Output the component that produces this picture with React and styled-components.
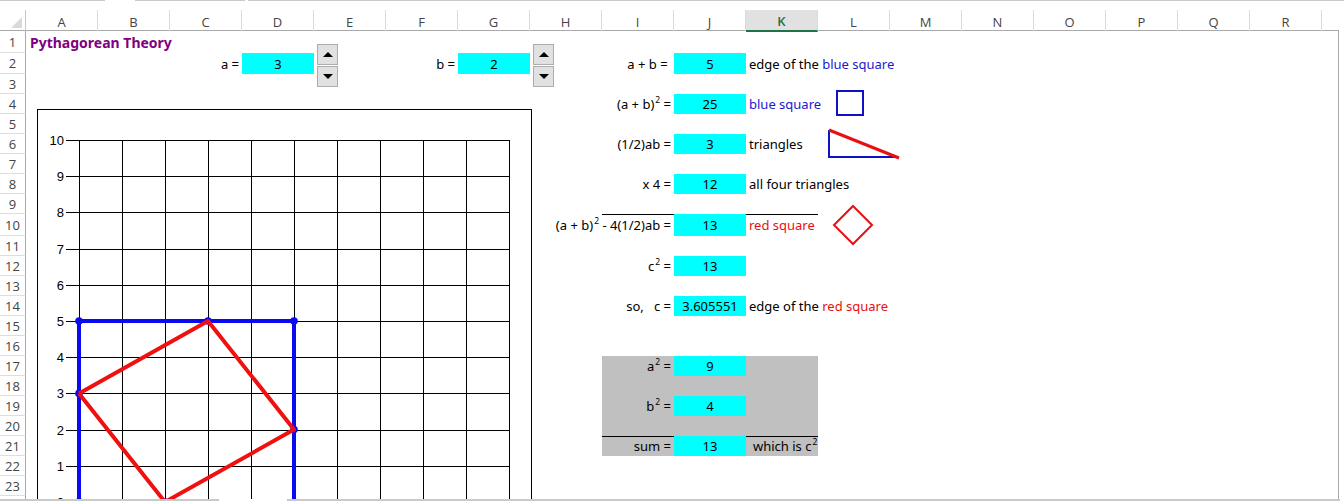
import React from 'react'
import styled, { createGlobalStyle, css } from 'styled-components'

const COLS = ['A', 'B', 'C', 'D', 'E', 'F', 'G', 'H', 'I', 'J', 'K', 'L', 'M', 'N', 'O', 'P', 'Q', 'R']
const ROW_H = [22, 21, 20, 20, 20, 20, 20, 20, 20, 22, 20, 20, 20, 20, 20, 20, 20, 20, 20, 20, 20, 20, 20, 20]
const TRACKS = `26px repeat(${COLS.length}, 72px) 16px`

// column letter -> grid column line (row header is column 1)
const col = (letter) => COLS.indexOf(letter) + 2

const GlobalStyle = createGlobalStyle`
  * { box-sizing: border-box; }
  html, body { margin: 0; padding: 0; background: #fff; overflow: hidden; }
  body { font-family: "Noto Sans", "DejaVu Sans", sans-serif; }
`

const Window = styled.div`
  width: 1344px;
  height: 501px;
  display: flex;
  flex-direction: column;
  overflow: hidden;
  background: #fff;
`

const TopRule = styled.div`
  display: flex;
  height: 10px;
  align-items: flex-start;
`

const RuleBit = styled.div`
  height: ${p => p.$h || 1}px;
  width: ${p => (p.$w ? `${p.$w}px` : 'auto')};
  flex: ${p => (p.$w ? 'none' : 1)};
  background: ${p => (p.$gap ? 'transparent' : '#c9c9c9')};
`

const HeaderRow = styled.div`
  display: grid;
  grid-template-columns: ${TRACKS};
  width: 1339px;
  height: 21px;
  border-bottom: 1px solid #a9a9a9;
`

const Corner = styled.div`
  display: flex;
  justify-content: flex-end;
  align-items: flex-end;
  padding: 0 3px 3px 0;
  border-right: 1px solid #c6c6c6;
`

const CornerMark = styled.div`
  width: 0;
  height: 0;
  border-left: 11px solid transparent;
  border-bottom: 11px solid #dadada;
`

const ColHead = styled.div`
  display: flex;
  align-items: center;
  justify-content: center;
  font-family: "Open Sans", "Noto Sans", sans-serif;
  font-size: 13px;
  color: ${p => (p.$active ? '#217346' : '#444')};
  font-weight: ${p => (p.$active ? 600 : 400)};
  background: ${p => (p.$active ? '#e1e1e1' : 'transparent')};
  border-right: 1px solid #dadada;
  border-bottom: ${p => (p.$active ? '2px solid #217346' : 'none')};
  margin-bottom: ${p => (p.$active ? '-1px' : 0)};
  padding-top: 2px;
`

const Body = styled.div`
  display: grid;
  grid-template-columns: ${TRACKS};
  grid-template-rows: ${ROW_H.map(h => `${h}px`).join(' ')};
  width: 1339px;
  height: 468px;
  overflow: hidden;
  border-right: 1px solid #a9a9a9;
  font-size: 13px;
  color: #000;
`

const RowNum = styled.div`
  grid-column: 1;
  grid-row: ${p => p.$row};
  display: flex;
  align-items: center;
  justify-content: center;
  font-family: "Open Sans", "Noto Sans", sans-serif;
  font-size: 13px;
  color: #444;
  border-right: 1px solid #a9a9a9;
  border-bottom: 1px solid #dedede;
`

const place = css`
  grid-column: ${p => p.$col} / span ${p => p.$span || 1};
  grid-row: ${p => p.$row} / span ${p => p.$rspan || 1};
`

const Title = styled.div`
  ${place};
  display: flex;
  align-items: center;
  padding-left: 4px;
  white-space: nowrap;
  font-weight: 700;
  font-size: 14px;
  color: #800080;
`

const LabelCell = styled.div`
  ${place};
  display: flex;
  align-items: center;
  justify-content: flex-end;
  padding-right: 3px;
  white-space: pre;
  min-width: 0;
`

const Value = styled.div`
  ${place};
  display: flex;
  align-items: center;
  justify-content: center;
  background: #00ffff;
  white-space: nowrap;
`

const NoteCell = styled.div`
  ${place};
  display: flex;
  align-items: center;
  padding-left: ${p => p.$indent || 3}px;
  white-space: pre;
  color: ${p => p.$color || '#000'};
`

const Tint = styled.span`
  color: ${p => p.$color};
`

const Sup = styled.sup`
  font-size: 8.5px;
  line-height: 0;
  vertical-align: 6px;
  margin-left: 1px;
`

const Label = ({ children, ...rest }) => (
  <LabelCell {...rest}><span>{children}</span></LabelCell>
)

const Note = ({ children, ...rest }) => (
  <NoteCell {...rest}><span>{children}</span></NoteCell>
)

const Panel = styled.div`
  ${place};
  background: #c0c0c0;
`

const TopLine = styled.div`
  ${place};
  border-top: 1px solid #000;
`

const SpinGroup = styled.div`
  ${place};
  align-self: start;
  justify-self: start;
  margin: 13px 0 0 3px;
  display: flex;
  flex-direction: column;
  gap: 1px;
`

const SpinButton = styled.div`
  width: 21px;
  height: 21px;
  border: 1px solid #acacac;
  background: #e1e1e1;
  display: flex;
  align-items: center;
  justify-content: center;
`

const Arrow = styled.div`
  width: 0;
  height: 0;
  border-left: 5px solid transparent;
  border-right: 5px solid transparent;
  ${p => (p.$down ? 'border-top: 5px solid #000;' : 'border-bottom: 5px solid #000;')}
`

const Figure = styled.svg`
  ${place};
  align-self: start;
  justify-self: start;
  overflow: visible;
  margin-left: ${p => p.$dx}px;
  margin-top: ${p => p.$dy}px;
`

const ChartBox = styled.div`
  ${place};
  align-self: start;
  justify-self: start;
  margin: 15px 0 0 11px;
  width: 495px;
  height: 420px;
  border: 1px solid #000;
  background: #fff;
`

const ChartText = styled.text`
  font-family: "Liberation Sans", "Noto Sans", sans-serif;
  font-size: 13px;
  fill: #000;
`

const BottomRule = styled.div`
  display: flex;
  height: 2px;
  width: 1340px;
`

const Spinner = ({ column }) => (
  <SpinGroup $col={column} $row={1} $rspan={3}>
    <SpinButton><Arrow /></SpinButton>
    <SpinButton><Arrow $down /></SpinButton>
  </SpinGroup>
)

const X0 = 41
const UX = 43
const Y0 = 392
const UY = 36.2
const px = x => X0 + x * UX
const py = y => Y0 - y * UY

const BLUE_PTS = [[0, 0], [0, 3], [0, 5], [3, 5], [5, 5], [5, 2], [5, 0], [2, 0], [0, 0]]
const RED_PTS = [[0, 3], [3, 5], [5, 2], [2, 0], [0, 3]]
const ticks = Array.from({ length: 11 }, (_, i) => i)

const Chart = () => (
  <ChartBox $col={col('A')} $row={4} $span={7} $rspan={21}>
    <svg width="493" height="418">
      <g stroke="#000" strokeWidth="1" shapeRendering="crispEdges">
        {ticks.map(i => (
          <line key={`h${i}`} x1={28} x2={px(10)} y1={Math.round(py(i)) + 0.5} y2={Math.round(py(i)) + 0.5} />
        ))}
        {ticks.map(i => (
          <line key={`v${i}`} x1={Math.round(px(i)) + 0.5} x2={Math.round(px(i)) + 0.5} y1={py(10)} y2={418} />
        ))}
      </g>
      {ticks.map(i => (
        <ChartText key={`t${i}`} x={26} y={py(i) + 5} textAnchor="end">{i}</ChartText>
      ))}
      <polyline
        points={BLUE_PTS.map(([x, y]) => `${px(x)},${py(y)}`).join(' ')}
        fill="none" stroke="#0a0af0" strokeWidth="4" strokeLinejoin="round"
      />
      {BLUE_PTS.map(([x, y], i) => (
        <circle key={`m${i}`} cx={px(x)} cy={py(y)} r="3.8" fill="#0a0af0" />
      ))}
      <polyline
        points={RED_PTS.map(([x, y]) => `${px(x)},${py(y)}`).join(' ')}
        fill="none" stroke="#f01010" strokeWidth="4" strokeLinejoin="round"
      />
    </svg>
  </ChartBox>
)

const BLUE_TXT = '#1a1ad0'
const RED_TXT = '#e81010'

export default function App() {
  return (
    <Window>
      <GlobalStyle />
      <TopRule>
        <RuleBit $w={105} />
        <RuleBit $w={30} $gap />
        <RuleBit $w={110} />
        <RuleBit $w={3} $gap />
        <RuleBit />
      </TopRule>

      <HeaderRow>
        <Corner><CornerMark /></Corner>
        {COLS.map(c => (
          <ColHead key={c} $active={c === 'K'}>{c}</ColHead>
        ))}
        <div />
      </HeaderRow>

      <Body>
        {ROW_H.map((_, i) => (
          <RowNum key={i} $row={i + 1}>{i + 1}</RowNum>
        ))}

        <Title $col={col('A')} $row={1} $span={3}>Pythagorean Theory</Title>

        <Label $col={col('C')} $row={2}>a =</Label>
        <Value $col={col('D')} $row={2}>3</Value>
        <Spinner column={col('E')} />

        <Label $col={col('F')} $row={2}>b =</Label>
        <Value $col={col('G')} $row={2}>2</Value>
        <Spinner column={col('H')} />

        <Chart />

        <TopLine $col={col('I')} $row={10} $span={3} />
        <Panel $col={col('I')} $row={17} $span={3} $rspan={5} />
        <TopLine $col={col('I')} $row={21} $span={3} />

        <Label $col={col('I')} $row={2}>a + b = </Label>
        <Value $col={col('J')} $row={2}>5</Value>
        <Note $col={col('K')} $row={2}>edge of the <Tint $color={BLUE_TXT}>blue square</Tint></Note>

        <Label $col={col('I')} $row={4}>(a + b)<Sup>2</Sup> =</Label>
        <Value $col={col('J')} $row={4}>25</Value>
        <Note $col={col('K')} $row={4} $color={BLUE_TXT}>blue square</Note>
        <Figure $col={col('L')} $row={4} $dx={18} $dy={-4} width="28" height="26">
          <rect x="1" y="1" width="26" height="24" fill="none" stroke="#1010c8" strokeWidth="2" />
        </Figure>

        <Label $col={col('I')} $row={6}>(1/2)ab =</Label>
        <Value $col={col('J')} $row={6}>3</Value>
        <Note $col={col('K')} $row={6}>triangles</Note>
        <Figure $col={col('L')} $row={6} $dx={10} $dy={-5} width="72" height="30">
          <polyline points="1,1 1,28 70,28" fill="none" stroke="#1010c8" strokeWidth="2" />
          <line x1="1" y1="1" x2="71" y2="29" stroke="#e81010" strokeWidth="3" />
        </Figure>

        <Label $col={col('I')} $row={8}>x 4 =</Label>
        <Value $col={col('J')} $row={8}>12</Value>
        <Note $col={col('K')} $row={8}>all four triangles</Note>

        <Label $col={col('I')} $row={10}>(a + b)<Sup>2</Sup> - 4(1/2)ab =</Label>
        <Value $col={col('J')} $row={10}>13</Value>
        <Note $col={col('K')} $row={10} $color={RED_TXT}>red square</Note>
        <Figure $col={col('L')} $row={10} $dx={15} $dy={-9} width="40" height="40">
          <polygon points="20,1 39,20 20,39 1,20" fill="none" stroke="#e81010" strokeWidth="2" />
        </Figure>

        <Label $col={col('I')} $row={12}>c<Sup>2</Sup> =</Label>
        <Value $col={col('J')} $row={12}>13</Value>

        <Label $col={col('I')} $row={14}>so,   c =</Label>
        <Value $col={col('J')} $row={14}>3.605551</Value>
        <Note $col={col('K')} $row={14}>edge of the <Tint $color={RED_TXT}>red square</Tint></Note>

        <Label $col={col('I')} $row={17}>a<Sup>2</Sup> =</Label>
        <Value $col={col('J')} $row={17}>9</Value>

        <Label $col={col('I')} $row={19}>b<Sup>2</Sup> =</Label>
        <Value $col={col('J')} $row={19}>4</Value>

        <Label $col={col('I')} $row={21}>sum =</Label>
        <Value $col={col('J')} $row={21}>13</Value>
        <Note $col={col('K')} $row={21} $indent={7}>which is c<Sup>2</Sup></Note>
      </Body>

      <BottomRule>
        <RuleBit $w={219} $h={2} />
        <RuleBit $w={68} $gap />
        <RuleBit $h={2} />
      </BottomRule>
    </Window>
  )
}
